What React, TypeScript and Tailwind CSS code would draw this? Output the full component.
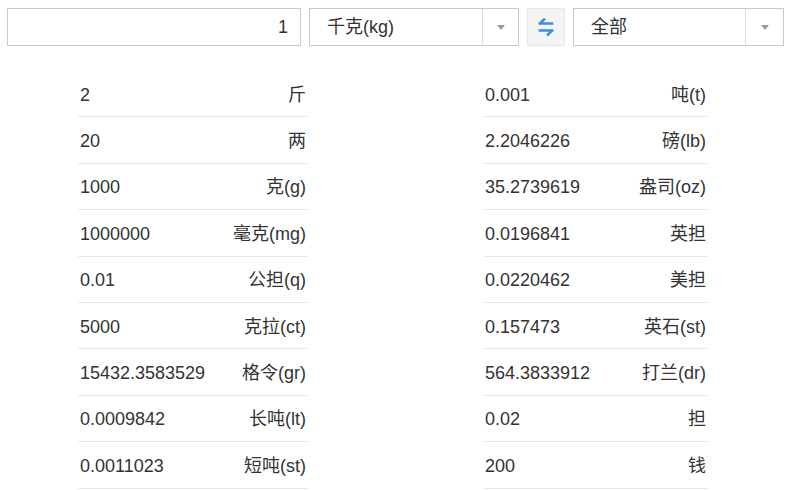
const left: [string, string][] = [
  ['2', '斤'],
  ['20', '两'],
  ['1000', '克(g)'],
  ['1000000', '毫克(mg)'],
  ['0.01', '公担(q)'],
  ['5000', '克拉(ct)'],
  ['15432.3583529', '格令(gr)'],
  ['0.0009842', '长吨(lt)'],
  ['0.0011023', '短吨(st)'],
];

const right: [string, string][] = [
  ['0.001', '吨(t)'],
  ['2.2046226', '磅(lb)'],
  ['35.2739619', '盎司(oz)'],
  ['0.0196841', '英担'],
  ['0.0220462', '美担'],
  ['0.157473', '英石(st)'],
  ['564.3833912', '打兰(dr)'],
  ['0.02', '担'],
  ['200', '钱'],
];

const Caret = () => (
  <span className="w-0 h-0 border-l-[4px] border-r-[4px] border-t-[5px] border-l-transparent border-r-transparent border-t-[#9a9a9a]" />
);

const Select = ({ label, w, arrowW }: { label: string; w: string; arrowW: string }) => (
  <div className={`flex h-[38px] border border-[#c9c9c9] bg-white ${w}`}>
    <div className="flex-1 flex items-center pl-[17px] pt-[1px]">{label}</div>
    <div className={`flex items-center justify-center border-l border-[#dcdcdc] ${arrowW}`}>
      <Caret />
    </div>
  </div>
);

const Column = ({ rows, w }: { rows: [string, string][]; w: string }) => (
  <div className={w}>
    {rows.map(([v, u]) => (
      <div
        key={u}
        className="h-[46.4px] flex items-center justify-between border-b border-[#e9e9e9] px-[2px] pt-[3px]"
      >
        <span>{v}</span>
        <span>{u}</span>
      </div>
    ))}
  </div>
);

export default function App() {
  return (
    <div className="w-[794px] h-[490px] overflow-hidden bg-white text-[#333] text-[18px] font-['Liberation_Sans','Noto_Sans_CJK_SC',sans-serif]">
      {/* 顶部输入栏 */}
      <div className="flex items-center pt-[8px] pl-[7px]">
        <div className="w-[294px] h-[38px] border border-[#c9c9c9] flex items-center justify-end pr-[12px] pt-[1px]">
          1
        </div>
        <div className="ml-[8px]">
          <Select label="千克(kg)" w="w-[210px]" arrowW="w-[36px]" />
        </div>
        <button className="ml-[8px] w-[38px] h-[38px] flex items-center justify-center bg-[#f4f4f4] border border-[#e8e8e8]">
          <svg width="18" height="18" viewBox="0 0 18 18" fill="none" stroke="#3b8de6" strokeWidth="2.6" strokeLinecap="square">
            <path d="M3 5.5h12M3 5.5l4-4" />
            <path d="M3 12.5h12M15 12.5l-4 4" />
          </svg>
        </button>
        <div className="ml-[8px]">
          <Select label="全部" w="w-[211px]" arrowW="w-[38px]" />
        </div>
      </div>

      {/* 结果列表 */}
      <div className="flex pl-[78px] gap-[175px] mt-[25px]">
        <Column rows={left} w="w-[230px]" />
        <Column rows={right} w="w-[225px]" />
      </div>
    </div>
  );
}
